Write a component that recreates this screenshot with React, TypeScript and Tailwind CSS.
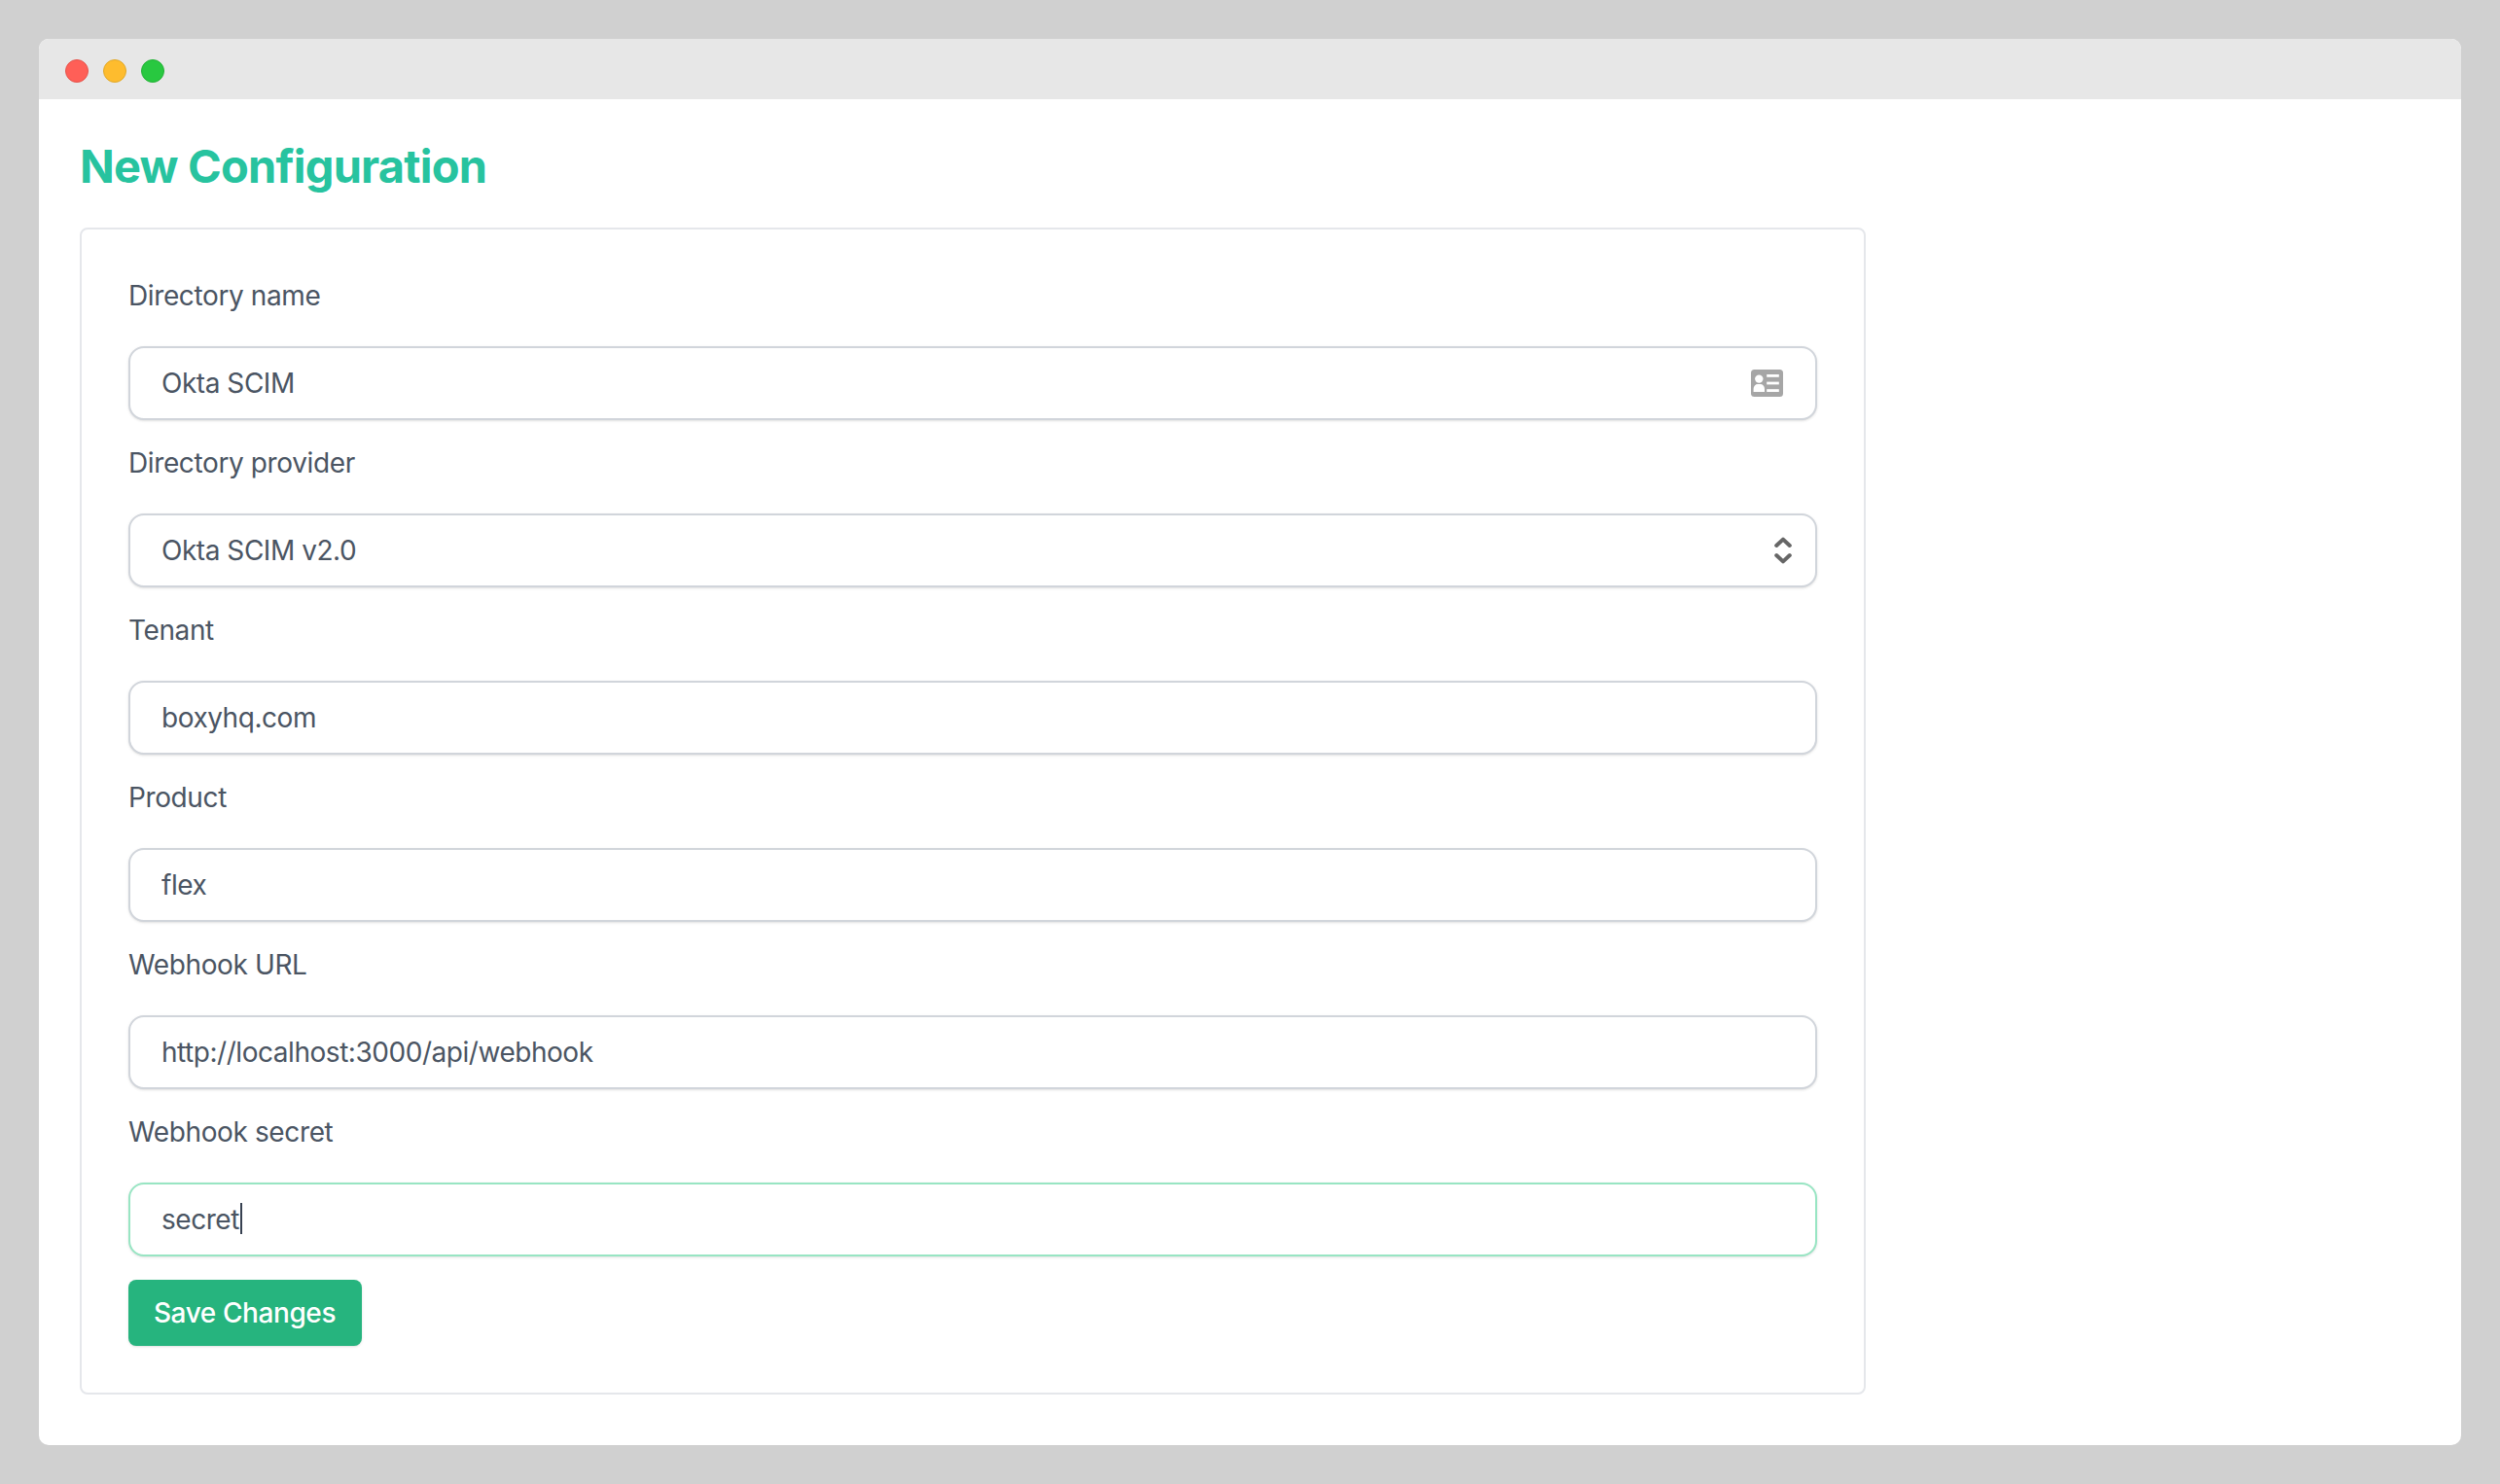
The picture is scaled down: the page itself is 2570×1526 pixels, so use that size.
import React from "react";

const fields = [
  { label: "Directory name", value: "Okta SCIM", kind: "icon" },
  { label: "Directory provider", value: "Okta SCIM v2.0", kind: "select" },
  { label: "Tenant", value: "boxyhq.com", kind: "text" },
  { label: "Product", value: "flex", kind: "text" },
  { label: "Webhook URL", value: "http://localhost:3000/api/webhook", kind: "text" },
  { label: "Webhook secret", value: "secret", kind: "focus" },
];

function CardIcon() {
  return (
    <svg width="33" height="28" viewBox="0 0 33 28" className="absolute right-[35px] top-[24px]">
      <rect x="0" y="0" width="33" height="28" rx="3.5" fill="#a6a6a6" />
      <circle cx="8.3" cy="9.6" r="4.2" fill="#ffffff" />
      <path d="M2.6 23 V20 C2.6 17 4.5 15 7 15 H9.6 C12.1 15 14 17 14 20 V23 Z" fill="#ffffff" />
      <rect x="16.2" y="5" width="12.6" height="2.8" fill="#ffffff" />
      <rect x="16.2" y="12.6" width="12.6" height="2.8" fill="#ffffff" />
      <rect x="16.2" y="20.2" width="12.6" height="2.8" fill="#ffffff" />
    </svg>
  );
}

function Chevrons() {
  return (
    <svg width="18" height="30" viewBox="0 0 18 30" fill="none" className="absolute right-[26px] top-[23px]">
      <path d="M2.2 10 L9 3.6 L15.8 10" stroke="#666666" strokeWidth="4" strokeLinejoin="round" strokeLinecap="round" />
      <path d="M2.2 20 L9 26.4 L15.8 20" stroke="#666666" strokeWidth="4" strokeLinejoin="round" strokeLinecap="round" />
    </svg>
  );
}

const inputBase =
  "h-[76px] w-full rounded-[16px] border-2 bg-white pl-[32px] text-[28px] tracking-[-0.46px] text-[#4b5563] shadow-sm outline-none";

export default function App() {
  return (
    <div className="h-[1526px] w-[2570px] bg-[#d0d0d0] px-[40px] pt-[40px] font-['Inter',sans-serif]">
      <div className="h-[1446px] overflow-hidden rounded-[10px] bg-white">
        <div className="flex h-[62px] items-center gap-[15px] bg-[#e7e7e7] pl-[27px] pt-[4px]">
          <span className="h-[24px] w-[24px] rounded-full border border-[#e5534b] bg-[#ff5f57]" />
          <span className="h-[24px] w-[24px] rounded-full border border-[#e0a828] bg-[#febc2e]" />
          <span className="h-[24px] w-[24px] rounded-full border border-[#22b135] bg-[#28c840]" />
        </div>
        <div className="w-[1878px] pl-[42px] pr-0">
          <h1 className="h-[70px] pt-[33px] text-[47px] leading-[72px] font-bold tracking-[-0.8px] text-[#27c39f]">
            New Configuration
          </h1>
          <div className="mt-[62px] flex h-[1200px] w-[1836px] flex-col gap-[24px] rounded-[8px] border-2 border-[#e5e7eb] p-[48px]">
            {fields.map((f) => (
              <div key={f.label}>
                <label className="block pb-[32px] text-[28px] leading-[40px] tracking-[-0.38px] text-[#4b5563]">{f.label}</label>
                <div className="relative">
                  {f.kind === "select" ? (
                    <select defaultValue={f.value} className={`${inputBase} appearance-none border-[#d1d5db]`}>
                      <option>{f.value}</option>
                    </select>
                  ) : (
                    <input
                      readOnly
                      value={f.value}
                      className={f.kind === "focus" ? `${inputBase} border-[#98e5c3]` : `${inputBase} border-[#d1d5db]`}
                    />
                  )}
                  {f.kind === "icon" && <CardIcon />}
                  {f.kind === "select" && <Chevrons />}
                  {f.kind === "focus" && (
                    <span className="absolute left-[115px] top-[21px] h-[32px] w-[2px] bg-[#374151]" />
                  )}
                </div>
              </div>
            ))}
            <button className="h-[68px] w-[240px] rounded-[8px] bg-[#26b47e] pr-[1px] text-[28px] font-medium tracking-[-0.4px] text-white shadow-sm">
              Save Changes
            </button>
          </div>
        </div>
      </div>
    </div>
  );
}
